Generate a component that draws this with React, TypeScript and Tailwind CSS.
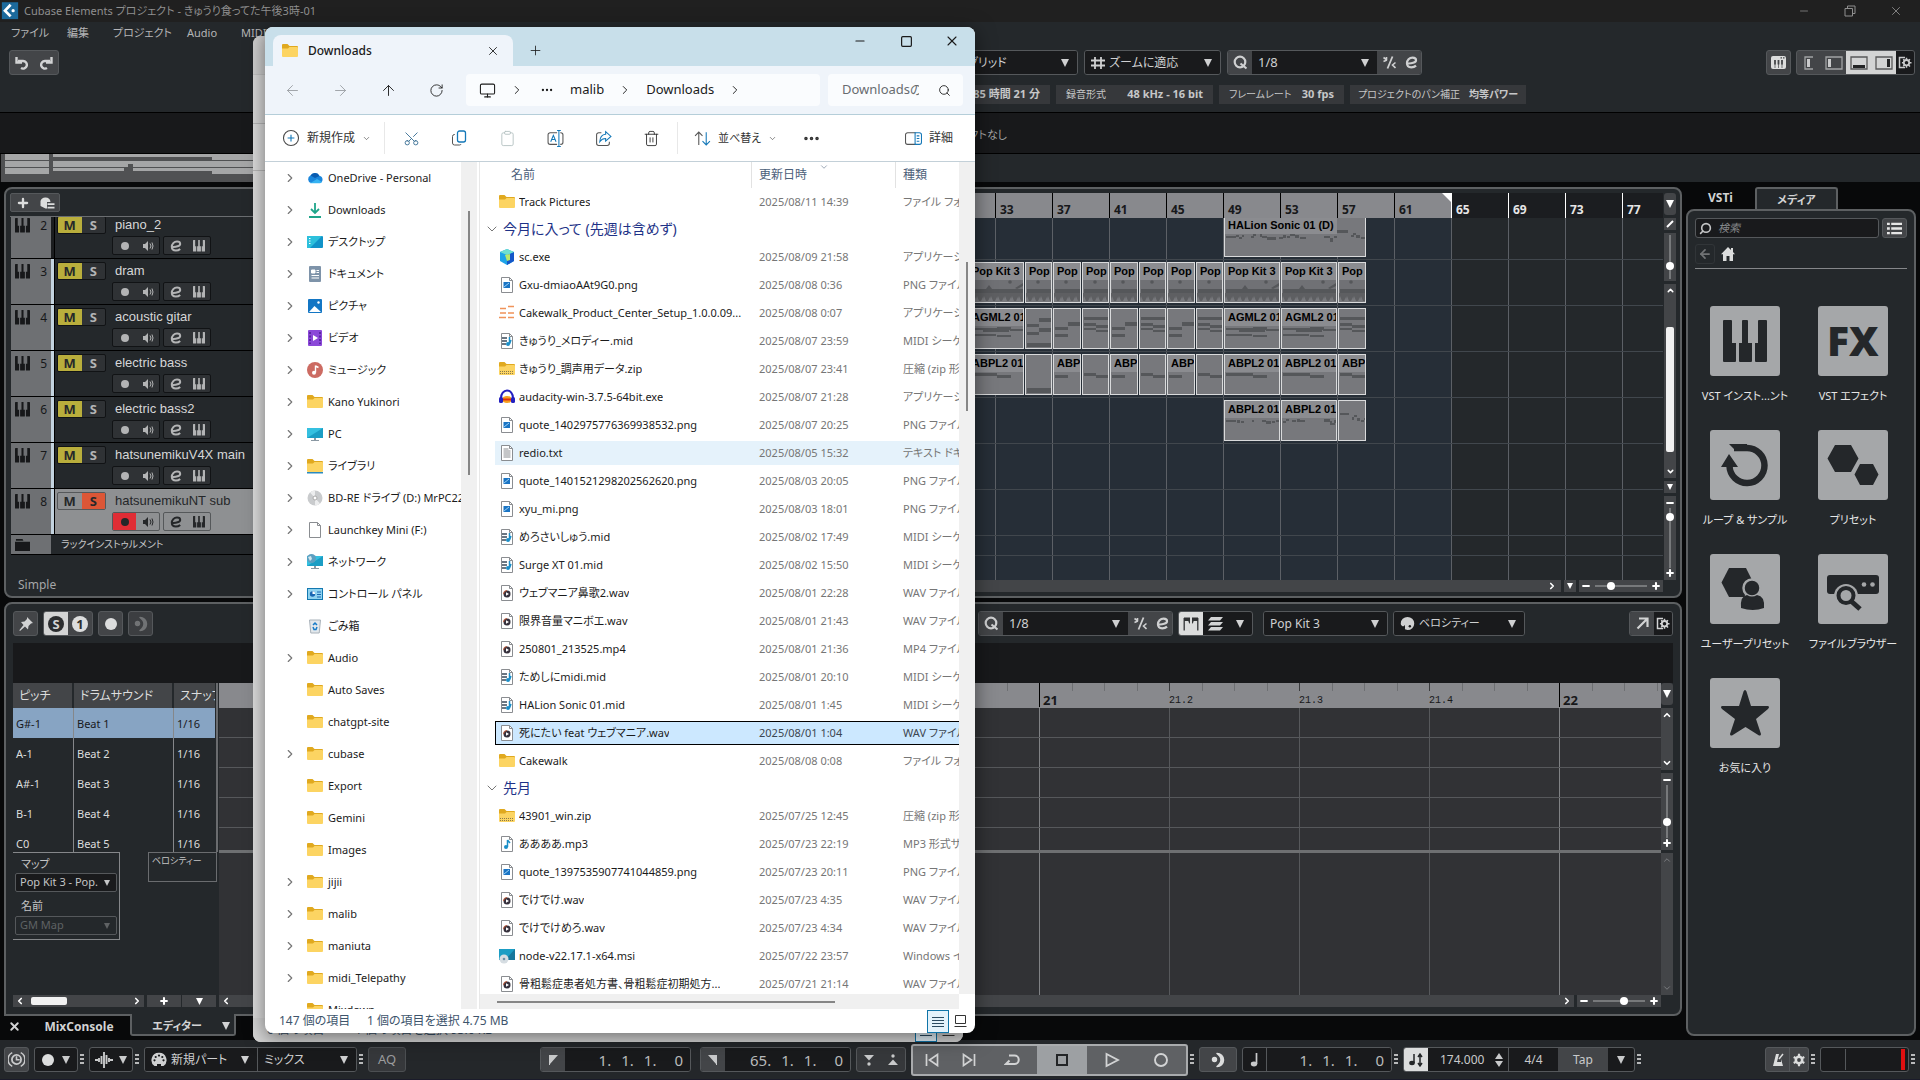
import type { ReactNode } from "react";
import {
  ArrowLeft,
  ArrowRight,
  ArrowUp,
  ChevronDown,
  ChevronLeft,
  ChevronRight,
  ChevronUp,
  Clipboard,
  Ellipsis,
  Minus,
  Monitor,
  Plus,
  RotateCw,
  Scissors,
  Search,
  Square,
  Trash2,
  X,
} from "lucide-react";

type Box = [number, number, number, number];

function Icon({ size = 16, box = 16, children }: { size?: number; box?: number; children: ReactNode }) {
  return (
    <svg width={size} height={size} viewBox={`0 0 ${box} ${box}`} className="shrink-0" aria-hidden="true">
      {children}
    </svg>
  );
}

/* ---------- shared DAW glyphs ---------- */

const Caret = ({ size = 8 }: { size?: number }) => (
  <Icon size={size} box={8}>
    <path d="M0 0h8L4 8z" fill="currentColor" />
  </Icon>
);

const Keys = ({ size = 16 }: { size?: number }) => (
  <Icon size={size} box={22}>
    <path
      fill="currentColor"
      d="M1 0h3v11.500h2V20.500a.8.8 0 0 1-.8.800H.8a.8.8 0 0 1-.8-.8V1a1 1 0 0 1 1-1zM9.500 0h3v11.500h2v9a.8.8 0 0 1-.8.800H8.300a.8.8 0 0 1-.8-.8v-9h2zM18 0h3a1 1 0 0 1 1 1v19.500a.8.8 0 0 1-.8.800h-4.400a.8.8 0 0 1-.8-.8v-9h2z"
    />
  </Icon>
);

const EditE = ({ size = 12 }: { size?: number }) => (
  <Icon size={size} box={12}>
    <path d="M1.800 6.800C6 7.200 10.200 6 10.200 3.900 10.200 2.200 8.500 1.500 7 1.500 4 1.500 1.800 4 1.800 6.800c0 2.300 1.700 3.700 4 3.700 1.800 0 3.200-.5 4.400-1.600" fill="none" stroke="currentColor" strokeWidth="2" />
  </Icon>
);

const Speaker = () => (
  <Icon size={12} box={12}>
    <path d="M1 4h2l3-3v10L3 8H1z" fill="currentColor" />
    <path d="M8 3.500q2 2.500 0 5M10 2.500q2 3.500 0 7" fill="none" stroke="currentColor" />
  </Icon>
);

const Swing = () => (
  <Icon size={13} box={13}>
    <path d="M9.500.5 4.500 12.500" stroke="currentColor" strokeWidth="1.800" />
    <path d="M.5 1.500 4 4M.5 5.500 4 4M3.500 1v3M12.500 6.500 9.500 9l3 3" fill="none" stroke="currentColor" strokeWidth="1.600" />
  </Icon>
);

const QMark = () => (
  <Icon size={15} box={15}>
    <circle cx="7" cy="7" r="5.300" fill="none" stroke="currentColor" strokeWidth="2.200" />
    <path d="M7.500 8.500 13.500 13.500" stroke="currentColor" strokeWidth="2.200" />
  </Icon>
);

const PanelGear = () => (
  <Icon size={14} box={14}>
    <path d="M7 1.500H1.500v10H7" fill="none" stroke="currentColor" strokeWidth="1.500" />
    <circle cx="8.500" cy="6.700" r="2.700" fill="none" stroke="currentColor" strokeWidth="1.800" />
    <path d="M8.500 1.800v2M8.500 9.700v2M3.900 6.700h1.500M11.500 6.700h2M5.200 3.200l1.500 1.500M10.500 9l1.500 1.500M12 3.200 10.300 4.700M5.200 10.300l1.500-1.500" stroke="currentColor" strokeWidth="1.500" />
  </Icon>
);

const Gear = () => (
  <Icon size={14} box={14}>
    <circle cx="7" cy="7" r="3.200" fill="none" stroke="currentColor" strokeWidth="2.600" />
    <path d="M7 .8v3M7 10.200v3M1.700 4l2.500 1.400M9.800 8.600 12.300 10M1.700 10l2.500-1.400M9.800 5.400 12.300 4" stroke="currentColor" strokeWidth="2.200" />
  </Icon>
);

const Moon = () => (
  <Icon size={16}>
    <circle cx="4.500" cy="7.500" r="2.700" fill="currentColor" />
    <path d="M7 1.500a6.500 6.500 0 0 1 0 13q4-3 4-6.500t-4-6.500z" fill="currentColor" stroke="currentColor" strokeWidth="1.500" strokeLinejoin="round" />
  </Icon>
);

const Palette = ({ size = 16 }: { size?: number }) => (
  <Icon size={size}>
    <path d="M8 1a7.200 7 0 0 0-7.200 7c0 2 1.400 3 3 3l1.500-1.500V14l2.700 1a7.200 7 0 0 0 0-14z" fill="currentColor" />
    <circle cx="10.500" cy="11" r="1.300" fill="#1a1b1d" />
  </Icon>
);

const MidiPlug = () => (
  <Icon size={16}>
    <path d="M8 .8A7.300 7.300 0 0 1 12.500 14H10v-2H6v2H3.500A7.300 7.300 0 0 1 8 .8z" fill="currentColor" />
    <g fill="#1a1b1d">
      <circle cx="8" cy="3.600" r="1.100" />
      <circle cx="4.700" cy="5" r="1.100" />
      <circle cx="11.300" cy="5" r="1.100" />
      <circle cx="3.500" cy="8.300" r="1.100" />
      <circle cx="12.500" cy="8.300" r="1.100" />
    </g>
  </Icon>
);

const Dots = () => (
  <Icon size={11} box={11}>
    <path d="M2 0h4v2H2zM2 4h4v2H2zM2 8h4v2H2z" fill="#b9babb" />
  </Icon>
);

function Btn({ label, className = "", children }: { label: string; className?: string; children?: ReactNode }) {
  return (
    <button aria-label={label} className={`flex shrink-0 items-center justify-center ${className}`}>
      {children}
    </button>
  );
}

const group = "flex h-[25px] shrink-0 overflow-hidden rounded-[3px] border border-[#55585b]";

function Drop({ label, value, icon, className = "" }: { label: string; value: string; icon?: ReactNode; className?: string }) {
  return (
    <label className={`relative flex items-center gap-1 bg-[#191a1c] pl-1.5 text-[#cfd0d1] ${className}`}>
      {icon}
      <select aria-label={label} className="w-full min-w-0 appearance-none truncate bg-transparent pr-5 outline-none">
        <option>{value}</option>
      </select>
      <span className="pointer-events-none absolute inset-y-0 right-2 flex items-center">
        <Caret />
      </span>
    </label>
  );
}

const thumb =
  "appearance-none [&::-webkit-slider-thumb]:size-2 [&::-webkit-slider-thumb]:appearance-none [&::-webkit-slider-thumb]:rounded-full [&::-webkit-slider-thumb]:bg-white";

function ZoomH({ value }: { value: number }) {
  return (
    <div className="flex h-3 w-[84px] shrink-0 items-center bg-[#434548] px-0.5 text-white">
      <Minus size={10} strokeWidth={5} />
      <input
        type="range"
        aria-label="横ズーム"
        defaultValue={value}
        className={`${thumb} mx-1 h-3 min-w-0 flex-1 bg-[linear-gradient(#77797b,#77797b)] bg-[length:100%_2px] bg-center bg-no-repeat`}
      />
      <Plus size={10} strokeWidth={5} />
    </div>
  );
}

function ZoomV({ value, className, ends = true }: { value: number; className: string; ends?: boolean }) {
  return (
    <div className={`flex w-3 shrink-0 flex-col items-center bg-[#434548] py-0.5 text-white ${className}`}>
      {ends && <Minus size={10} strokeWidth={5} className="shrink-0" />}
      <input
        type="range"
        aria-label="縦ズーム"
        defaultValue={value}
        className={`${thumb} my-1 min-h-0 w-3 flex-1 bg-[linear-gradient(#77797b,#77797b)] bg-[length:2px_100%] bg-center bg-no-repeat [writing-mode:vertical-lr]`}
      />
      {ends && <Plus size={10} strokeWidth={5} className="shrink-0" />}
    </div>
  );
}

/* ---------- top of the DAW ---------- */

function QuantizeGroup() {
  return (
    <div className={group}>
      <Btn label="クオンタイズ" className="w-6 bg-[#434548] text-[#cfd0d1]"><QMark /></Btn>
      <Drop label="クオンタイズ値" value="1/8" className="w-[125px] text-[13px]" />
      <Btn label="スウィング" className="w-6 bg-[#434548] text-[#cfd0d1]"><Swing /></Btn>
      <Btn label="クオンタイズ編集" className="w-5 bg-[#434548] text-[#cfd0d1]"><EditE size={13} /></Btn>
    </div>
  );
}

function LayoutGlyph({ bar, half = false }: { bar: Box; half?: boolean }) {
  return (
    <Icon size={18} box={18}>
      <path d={half ? "M13 3H5v12h8" : "M1 3h16v12H1z"} fill="none" stroke="currentColor" strokeWidth="1.300" opacity=".7" />
      <rect x={bar[0]} y={bar[1]} width={bar[2]} height={bar[3]} fill="currentColor" />
    </Icon>
  );
}

const chips = [
  ["録音形式", "48 kHz - 16 bit", "w-[157px] px-2.5"],
  ["フレームレート", "30 fps", "w-[125px] px-2.5"],
  ["プロジェクトのパン補正", "均等パワー", "w-[176px] px-2 text-[10px]"],
];

const overview: Box[] = [
  [5, 0, 44, 6], [53, 0, 700, 3], [212, 3, 541, 3],
  [5, 7, 44, 6], [53, 7, 75, 6], [128, 7, 5, 3], [133, 7, 620, 6],
  [5, 14, 44, 6], [53, 14, 71, 3], [133, 14, 79, 3], [212, 14, 541, 6],
];

function TopBars() {
  return (
    <header>
      <div className="flex h-[22px] items-center bg-[#202020] text-[#8f8f8f]">
        <Icon size={20}>
          <rect x="1.500" y="1" width="13" height="13.500" fill="#1c6a9c" />
          <path d="M8.500 3 4 7.700 8.500 12.300" fill="none" stroke="#fff" strokeWidth="2.200" />
          <circle cx="10.500" cy="7.700" r="1.300" fill="#fff" />
        </Icon>
        <h1 className="ml-1 text-[11px]">Cubase Elements プロジェクト - きゅうり食ってた午後3時-01</h1>
        <div className="mr-px ml-auto flex">
          <Btn label="最小化" className="w-[46px]"><Minus size={12} strokeWidth={1.500} /></Btn>
          <Btn label="元に戻す" className="w-[46px]">
            <Icon size={12} box={12}>
              <path d="M1 3.500h7.500V11H1zM3.500 3.500V1H11v7.500H8.500" fill="none" stroke="currentColor" />
            </Icon>
          </Btn>
          <Btn label="閉じる" className="w-[46px]"><X size={14} strokeWidth={1.500} /></Btn>
        </div>
      </div>
      <nav className="flex h-[22px] items-center pl-[11px] text-[11px] text-[#b4b5b6]">
        <button className="w-14 text-left">ファイル</button>
        <button className="w-[46px] text-left">編集</button>
        <button className="w-[74px] text-left">プロジェクト</button>
        <button className="w-[54px] text-left">Audio</button>
        <button className="text-left">MIDI</button>
      </nav>
      <div className="mt-1.5 flex h-[25px] items-center gap-1.5 pr-[5px] pl-[9px] text-xs">
        <div className={`${group} w-[50px] bg-[#434548] text-[#d2d3d4]`}>
          <Btn label="元に戻す" className="flex-1">
            <Icon size={14} box={14}>
              <path d="M3 5h5a3.800 3.800 0 1 1-2 7M1.500 1v5.500H7" fill="none" stroke="currentColor" strokeWidth="2.400" />
            </Icon>
          </Btn>
          <Btn label="やり直す" className="flex-1">
            <Icon size={14} box={14}>
              <path d="M11 5H6a3.800 3.800 0 1 0 2 7M12.500 1v5.500H7" fill="none" stroke="currentColor" strokeWidth="2.400" />
            </Icon>
          </Btn>
        </div>
        <div className={`${group} ml-[895px] w-[118px]`}>
          <Drop label="スナップタイプ" value="グリッド" className="w-full" />
        </div>
        <div className={`${group} w-[137px]`}>
          <Drop
            label="グリッドの種類"
            value="ズームに適応"
            className="w-full"
            icon={
              <Icon size={14} box={14}>
                <path d="M4 1v12M10 1v12M0 4.500h14M0 9.500h14" stroke="currentColor" strokeWidth="1.800" />
              </Icon>
            }
          />
        </div>
        <QuantizeGroup />
        <div className="ml-auto flex gap-[5px]">
          <div className={`${group} w-[25px] justify-center bg-[#434548] text-[#dcdddd]`}>
            <Btn label="オンスクリーンキーボード">
              <Icon size={15} box={15}>
                <rect x="0" y="1" width="15" height="13" rx="2" fill="currentColor" />
                <path d="M9.500 2.800H11M12 2.800h1.500" stroke="#434548" strokeWidth="1.200" />
                <path d="M4 5v4.500M7.500 5v4.500M11 5v4.500" stroke="#434548" strokeWidth="1.800" />
                <path d="M4 9v4M7.500 9v4M11 9v4" stroke="#434548" strokeWidth=".7" />
              </Icon>
            </Btn>
          </div>
          <div className={`${group} bg-[#434548] text-[#c9cacb]`}>
            <Btn label="インスペクター" className="w-6"><LayoutGlyph half bar={[7, 5, 3, 8]} /></Btn>
            <Btn label="左ゾーン" className="w-[25px]"><LayoutGlyph bar={[3, 5, 3, 8]} /></Btn>
            <Btn label="下ゾーン" className="w-[25px] bg-[#d3d4d4] text-[#232425]"><LayoutGlyph bar={[3, 11, 12, 3]} /></Btn>
            <Btn label="右ゾーン" className="w-[25px] bg-[#d3d4d4] text-[#232425]"><LayoutGlyph bar={[12, 5, 3, 8]} /></Btn>
            <Btn label="ウィンドウレイアウト設定" className="w-[18px] bg-[#191a1c]"><PanelGear /></Btn>
          </div>
        </div>
      </div>
      <dl className="mt-2.5 mb-2 flex h-[19px] gap-1.5 pl-[860px] text-[11px] whitespace-nowrap text-[#c6c7c8]">
        <div className="flex w-[190px] items-center justify-end bg-[#36383b] pr-2.5">
          <dd className="font-bold">85 時間 21 分</dd>
        </div>
        {chips.map(([k, v, w]) => (
          <div key={k} className={`flex items-center justify-between bg-[#36383b] ${w}`}>
            <dt className="text-[10px]">{k}</dt>
            <dd className="font-bold">{v}</dd>
          </div>
        ))}
      </dl>
      <div className="flex h-[42px] items-center border-y border-black bg-[#18191b] pt-1 text-[11px] text-[#a3a4a5]">
        <p className="w-[1007px] text-right">オブジェクトなし</p>
      </div>
      <svg width="753" height="28" className="block bg-[#505153]" aria-hidden="true">
        <rect width="1" height="28" fill="#111" />
        {overview.map(([x, y, w, h], i) => (
          <rect key={i} x={x} y={y} width={w} height={h} fill="#a5a6a7" />
        ))}
      </svg>
    </header>
  );
}

/* ---------- project zone ---------- */

const tracks = [
  { no: 2, name: "piano_2" },
  { no: 3, name: "dram" },
  { no: 4, name: "acoustic gitar" },
  { no: 5, name: "electric bass" },
  { no: 6, name: "electric bass2" },
  { no: 7, name: "hatsunemikuV4X main" },
  { no: 8, name: "hatsunemikuNT sub" },
];

function Track({ no, name }: { no: number; name: string }) {
  const active = no === 8;
  const frame = active ? "border-[#55585a] text-[#252729]" : "border-[#111315] bg-[#2f3235] text-[#b3b4b5]";
  return (
    <li className="flex h-[46px] border-b border-black">
      <div className="flex w-10 justify-between bg-[#6e7073] pt-[5px] pr-1 pl-1 text-[#17181a]">
        <Keys size={15} />
        <span className="text-xs leading-4">{no}</span>
      </div>
      <div className={`w-[3px] ${no === 2 ? "bg-[#1b1d1f]" : "bg-[#c3d3df]"}`} />
      <div className={`flex-1 border-l border-black pt-[3px] pl-0.5 ${active ? "bg-[#8e9092]" : ""}`}>
        <div className="flex h-[18px] items-center">
          <div className={`flex h-[18px] w-[49px] overflow-hidden rounded-[2px] border text-[13px] leading-4 font-bold ${frame}`}>
            <button className={`flex-1 ${active ? "" : "bg-[#b9ae3c] text-[#26282a]"}`}>M</button>
            <button className={`flex-1 ${active ? "bg-[#dc5636] text-[#26282a]" : ""}`}>S</button>
          </div>
          <span className={`ml-[9px] font-['Liberation_Sans','Noto_Sans_CJK_JP',sans-serif] text-[13px] leading-4 ${active ? "text-[#252729]" : "text-[#d6d7d8]"}`}>
            {name}
          </span>
        </div>
        <div className="mt-0.5 ml-[55px] flex h-[19px] gap-[3px]">
          <div className={`flex w-12 overflow-hidden rounded-[2px] border ${frame}`}>
            <Btn label="録音可能" className={`flex-1 ${active ? "bg-[#e02d35]" : ""}`}>
              <span className="size-2 rounded-full bg-current" />
            </Btn>
            <Btn label="モニター" className="flex-1"><Speaker /></Btn>
          </div>
          <div className={`flex w-12 overflow-hidden rounded-[2px] border ${frame}`}>
            <Btn label="チャンネル設定の編集" className="flex-1"><EditE /></Btn>
            <Btn label="インストゥルメントの編集" className="flex-1"><Keys size={12} /></Btn>
          </div>
        </div>
      </div>
    </li>
  );
}

// bars left of 33 keep their ticks but carry no number
const bars = [9, 13, 17, 21, 25, 29, 33, 37, 41, 45, 49, 53, 57, 61, 65, 69, 73, 77];

const noteShapes: Record<string, Box[]> = {
  agWide: [[1, 19, 40, 2], [14, 20, 26, 3], [28, 18, 14, 3], [41, 20, 14, 2], [1, 25, 26, 2], [28, 26, 14, 2]],
  agA: [[1, 15, 12, 3], [13, 9, 13, 4], [1, 23, 12, 3], [13, 19, 13, 4], [1, 34, 25, 4]],
  agB: [[1, 18, 13, 3], [14, 13, 13, 4], [1, 25, 13, 3]],
  agC: [[1, 8, 25, 3], [1, 14, 12, 3], [13, 16, 13, 3], [1, 19, 12, 2], [13, 21, 13, 2]],
  bassWide: [[1, 18, 27, 3], [28, 20, 14, 3]],
  bassLow: [[1, 33, 25, 5]],
  bassS: [[1, 20, 13, 3]],
  bassT: [[1, 18, 12, 3], [13, 20, 13, 3]],
  bits: [[1, 19, 10, 2], [12, 19, 3, 3], [16, 20, 3, 2], [27, 19, 2, 2], [37, 19, 4, 2], [41, 20, 5, 3], [47, 20, 3, 2], [51, 19, 4, 2]],
  bits2: [[1, 20, 3, 2], [4, 18, 3, 2], [10, 19, 4, 2], [15, 18, 3, 3], [18, 19, 5, 2], [42, 18, 6, 3], [48, 20, 2, 4], [50, 22, 3, 2], [52, 19, 3, 3]],
  bits3: [[1, 12, 9, 2], [13, 16, 2, 3], [15, 14, 3, 2], [18, 17, 3, 3], [22, 19, 3, 2], [25, 17, 2, 2]],
  lead: [[1, 19, 10, 2], [11, 18, 3, 2], [14, 20, 3, 2], [17, 18, 2, 2], [26, 19, 3, 2], [28, 17, 3, 2], [35, 17, 2, 3], [37, 19, 5, 2], [42, 20, 9, 3], [54, 20, 4, 2], [58, 18, 3, 3], [62, 19, 3, 2], [65, 17, 5, 2], [70, 18, 4, 3], [75, 20, 6, 2], [99, 19, 6, 2], [105, 21, 3, 4], [109, 19, 3, 2], [112, 13, 11, 3], [126, 18, 3, 2], [128, 16, 3, 2], [131, 18, 4, 3], [136, 20, 5, 2]],
};

type ClipData = [left: number, width: number, label: string, notes: string];

const cuts: [number, number][] = [
  [315, 57], [372, 28], [400, 29], [429, 28], [457, 29], [486, 28], [514, 29], [543, 28], [571, 57], [628, 57], [685, 29],
];
const row = (labels: string[], notes: string[]): ClipData[] =>
  cuts.map(([x, w], i) => [x, w, labels[i], notes[i]]);

const lanes: [string, ClipData[]][] = [
  ["-top-0.5", [[571, 143, "HALion Sonic 01 (D)", "lead"]]],
  ["top-[44px]", row(["Pop Kit 3", "Pop", "Pop", "Pop", "Pop", "Pop", "Pop", "Pop", "Pop Kit 3", "Pop Kit 3", "Pop"], Array(11).fill("drum"))],
  ["top-[90px]", row(["AGML2 01", "", "", "", "", "", "", "", "AGML2 01", "AGML2 01", ""], ["agWide", "agA", "agB", "agC", "agB", "agC", "agB", "agC", "agWide", "agWide", "agC"])],
  ["top-[136px]", row(["ABPL2 01", "", "ABP", "", "ABP", "", "ABP", "", "ABPL2 01", "ABPL2 01", "ABP"], ["bassWide", "bassLow", "bassS", "bassT", "bassS", "bassT", "bassS", "bassT", "bassWide", "bassWide", "bassT"])],
  ["top-[182px]", [[571, 57, "ABPL2 01", "bits"], [628, 57, "ABPL2 01", "bits2"], [685, 29, "", "bits3"]]],
];

function DrumNotes({ width }: { width: number }) {
  const hits = Array.from({ length: Math.ceil(width / 7) }, (_, i) => i * 7);
  return (
    <g fill="#55575a">
      <rect x="1" y="17" width={width - 4} height="9" opacity=".2" />
      <rect x="1" y="26" width={width - 4} height="4" />
      <circle cx={width > 30 ? 41 : 12} cy="19" r="1.800" />
      {width > 30 && <path d="M17 26l3-4 3 4zM46 25l8-5v3l-6 3z" />}
      {hits.map((x) => (
        <path key={x} d={`M${x} 30h7v4l-2 4h-2l-2-5-1 3z`} opacity=".75" />
      ))}
    </g>
  );
}

function Clip({ clip: [left, width, label, notes] }: { clip: ClipData }) {
  return (
    <div className="absolute h-[41px] overflow-hidden border border-[#d9dadb] bg-[#77787c]" style={{ left, width: width - 1 }}>
      <svg width={width - 3} height="39" className="absolute inset-0" aria-hidden="true">
        {label && <rect width={Math.min(width, 112)} height="17" fill="#8b8c90" />}
        {notes === "drum" ? (
          <DrumNotes width={width} />
        ) : (
          noteShapes[notes].map(([x, y, w, h], i) => <rect key={i} x={x} y={y} width={w} height={h} fill="#55575a" />)
        )}
      </svg>
      <span className="relative block pl-[3px] font-['Liberation_Sans',sans-serif] text-[11px] leading-[17px] font-bold whitespace-nowrap text-black">
        {label}
      </span>
    </div>
  );
}

function ProjectZone() {
  return (
    <section className="flex rounded-lg border-2 border-[#5d6062] bg-[#24282b] p-1">
      <div className="flex w-[643px] shrink-0 flex-col">
        <div className="flex h-[19px] w-[50px] overflow-hidden rounded-[2px] border border-[#55585b] bg-[#434548] text-[#dcdddd]">
          <Btn label="トラックを追加" className="flex-1"><Plus size={14} strokeWidth={4} /></Btn>
          <Btn label="トラックプリセットを使用" className="flex-1">
            <Icon size={16}>
              <path d="M6.500 2.500a5 5 0 0 1 5 4.500H8v6.500H6.500L1.500 11V6a5 5 0 0 1 5-3.500z" fill="currentColor" />
              <path d="M8.500 9.200h7M8.500 12.700h7" stroke="currentColor" strokeWidth="1.800" />
            </Icon>
          </Btn>
        </div>
        <div className="mt-1 overflow-hidden border-t border-[#6a6d70]">
          <ul className="-mt-1 pl-px">
            {tracks.map((t) => (
              <Track key={t.no} {...t} />
            ))}
            <li className="flex h-5 items-center border-b border-black text-[10px] text-[#c4c5c6]">
              <span className="flex h-full w-10 items-center bg-[#6e7073] pl-1 text-[#17181a]">
                <Icon size={15}>
                  <path d="M1 2h7l1 2H1zM0 5h16v10H0z" fill="currentColor" />
                </Icon>
              </span>
              <span className="pl-2.5">ラックインストゥルメント</span>
            </li>
          </ul>
        </div>
        <p className="mt-auto pl-2 text-xs leading-[14px] text-[#a5a6a7]">Simple</p>
      </div>

      <div className="flex min-w-0 flex-1 flex-col">
        <div className="flex h-[25px] overflow-hidden bg-[#1b1d20] text-xs font-bold">
          {bars.map((b) => (
            <div
              key={b}
              className={`flex w-[57px] shrink-0 items-end justify-between border-l pl-1 ${b < 65 ? "border-black bg-[#88898d] text-[#17181a]" : "border-white text-[#e6e6e6]"}`}
            >
              {b >= 33 && b}
              {b === 61 && (
                <span className="self-start text-white">
                  <Icon size={9} box={9}><path d="M0 0h9v9z" fill="currentColor" /></Icon>
                </span>
              )}
            </div>
          ))}
        </div>
        <div className="relative h-[362px] overflow-hidden bg-[#24282b]">
          <div className="absolute inset-y-0 left-0 w-[798px] bg-[#262e37]" />
          <div className="absolute inset-0 bg-[repeating-linear-gradient(90deg,#5c6066_0_1px,transparent_1px_57px)]" />
          <div className="absolute inset-0 grid grid-rows-[42px_repeat(6,46px)_20px] divide-y divide-[#41474d]">
            {[...tracks, { no: 9 }].map((t) => (
              <div key={t.no} />
            ))}
            <div />
          </div>
          {lanes.map(([top, clips]) => (
            <div key={top} className={`absolute left-0 ${top}`}>
              {clips.map((c) => (
                <Clip key={c[0]} clip={c} />
              ))}
            </div>
          ))}
        </div>
        <div className="flex h-3 gap-[3px]">
          <div className="flex flex-1 items-center justify-end bg-[#434548] pr-1 text-white"><ChevronRight size={10} strokeWidth={4} /></div>
          <Btn label="ズームプリセット" className="w-3 bg-[#434548] text-white"><Caret size={6} /></Btn>
          <ZoomH value={28} />
        </div>
      </div>

      <div className="ml-px flex w-3 flex-col gap-[3px] text-white">
        <Btn label="ルーラーメニュー" className="h-[22px] rounded-[3px] bg-[#434548]"><Caret /></Btn>
        <Btn label="編集" className="h-3 bg-[#434548]">
          <Icon size={8} box={8}><path d="M1 7 7 1" stroke="#fff" strokeWidth="2" /></Icon>
        </Btn>
        <ZoomV value={76} ends={false} className="h-12" />
        <div className="flex flex-1 flex-col items-center bg-[#434548] py-0.5">
          <ChevronUp size={9} strokeWidth={4} />
          <div className="mt-8 h-[125px] w-2 rounded-xs bg-[#f1f1f1]" />
          <ChevronDown size={9} strokeWidth={4} className="mt-auto" />
        </div>
        <Btn label="縦ズームプリセット" className="h-3 bg-[#434548]"><Caret size={6} /></Btn>
        <ZoomV value={9} className="mb-3 h-[84px]" />
      </div>
    </section>
  );
}

/* ---------- drum editor ---------- */

const drums = [
  ["G#-1", "Beat 1"],
  ["A-1", "Beat 2"],
  ["A#-1", "Beat 3"],
  ["B-1", "Beat 4"],
  ["C0", "Beat 5"],
];

const beats = ["", "", "", "", "", "", "21", "21.2", "21.3", "21.4", "22"];

function BeatLines() {
  return (
    <div className="absolute inset-0 flex overflow-hidden pl-10">
      {beats.map((b, i) => (
        <div key={i} className={`w-[130px] shrink-0 border-l ${b === "21" || b === "22" ? "border-[#808285]" : "border-[#56585b]"}`} />
      ))}
    </div>
  );
}

function EditorZone() {
  return (
    <section className="flex flex-1 flex-col rounded-lg rounded-bl-none border-2 border-[#5d6062] bg-[#24282b] pr-[7px] pb-[7px] pl-[7px]">
      <div className="flex h-[39px] items-center gap-[5px] text-xs text-[#d2d3d4]">
        <div className={`${group} w-[25px] justify-center bg-[#434548]`}>
          <Btn label="固定">
            <Icon size={16}>
              <path d="M9 1l6 6-2 .5-2.500 2.500-.5 3.500-3-3L2 15l-.7-.7L5.500 9 3 6l3.500-.5L9 3z" fill="currentColor" />
            </Icon>
          </Btn>
        </div>
        <div className={`${group} w-[50px] bg-[#434548]`}>
          <button className="flex flex-1 items-center justify-center bg-[#d3d4d4]">
            <span className="size-4 rounded-full bg-[#2b2d2f] text-center text-[13px] leading-4 font-bold text-[#d3d4d4]">S</span>
          </button>
          <button className="flex flex-1 items-center justify-center">
            <span className="size-4 rounded-full bg-[#dcdddd] text-center text-[13px] leading-4 font-bold text-[#2b2d2f]">1</span>
          </button>
        </div>
        <div className={`${group} w-[25px] justify-center bg-[#434548]`}>
          <Btn label="エディターで録音"><span className="size-3 rounded-full bg-[#dcdddd]" /></Btn>
        </div>
        <div className={`${group} w-[25px] justify-center bg-[#3c3e41] text-[#717375]`}>
          <Btn label="レトロスペクティブ録音"><Moon /></Btn>
        </div>
        <div className="ml-[820px]"><QuantizeGroup /></div>
        <div className={`${group} w-[75px] bg-[#191a1c]`}>
          <Btn label="パート境界線" className="w-6 bg-[#dcdddd] text-[#303234]">
            <Icon size={16}>
              <path d="M1.200 14.500V2M14.800 14.500V2" stroke="currentColor" strokeWidth="1.300" />
              <path d="M1 1.500h6v3.500H1zM9 1.500h6v3.500H9zM5.500 2H7v6l-1.500-2zM9 2h1.500v4L9 8z" fill="currentColor" />
            </Icon>
          </Btn>
          <Btn label="パートを編集" className="flex-1">
            <Icon size={16}>
              <path d="M4 1h12l-3 3.500H1zM4 6h12l-3 3.500H1zM4 11h12l-3 3.500H1z" fill="currentColor" />
            </Icon>
          </Btn>
          <Btn label="パート一覧" className="flex-1"><Caret /></Btn>
        </div>
        <div className={`${group} ml-[5px] w-[125px]`}><Drop label="編集中のパート" value="Pop Kit 3" className="w-full" /></div>
        <div className={`${group} w-[132px]`}>
          <Drop label="イベントカラー" value="ベロシティー" className="w-full text-[11px]" icon={<Palette size={15} />} />
        </div>
        <div className={`${group} ml-auto w-11`}>
          <Btn label="別ウィンドウで開く" className="w-6 bg-[#434548]">
            <Icon size={13} box={13}><path d="M1.500 11.500 11 2M3 1.500h8.500V10" fill="none" stroke="currentColor" strokeWidth="2.200" /></Icon>
          </Btn>
          <Btn label="ツールバー設定" className="w-[18px] bg-[#191a1c]"><PanelGear /></Btn>
        </div>
      </div>
      <div className="h-10 bg-[#18191b]" />

      <div className="flex flex-1">
        <div className="flex w-[206px] flex-col">
          <div className="mr-px h-[169px] overflow-hidden border-r-2 border-[#6a6c6f] pr-px">
            <table className="w-full table-fixed border-separate border-spacing-0 text-left text-[11px] text-[#dcdddd]">
              <colgroup>
                <col className="w-[61px]" />
                <col className="w-[100px]" />
                <col />
              </colgroup>
              <thead>
                <tr className="h-[25px] bg-[#434548] text-xs whitespace-nowrap">
                  <th className="overflow-hidden border-r-2 border-[#24282b] pl-1.5 font-normal">ピッチ</th>
                  <th className="overflow-hidden border-r-2 border-[#24282b] pl-1.5 font-normal">ドラムサウンド</th>
                  <th className="overflow-hidden pl-1.5 font-normal">スナップ</th>
                </tr>
              </thead>
              <tbody>
                {drums.map(([pitch, sound], i) => (
                  <tr key={pitch} className={`h-[30px] ${i === 0 ? "bg-[#87a4c3] text-[#17191c]" : ""}`}>
                    <td className="border-r border-[#85878a] pt-0.5 pl-[3px]">{pitch}</td>
                    <td className="border-r border-[#85878a] pt-0.5 pl-[3px]">{sound}</td>
                    <td className="pt-0.5 pl-[3px]">1/16</td>
                  </tr>
                ))}
              </tbody>
            </table>
          </div>
          <div className="flex items-start justify-between pr-0.5 text-[11px] text-[#c4c5c6]">
            <div className="flex w-[107px] flex-col border border-l-0 border-[#85878a] px-0.5 pt-[3px] pb-1">
              <label htmlFor="drum-map" className="h-[17px] pl-1.5">マップ</label>
              <div className="relative flex h-[19px] items-center rounded-[2px] border border-[#55585b] bg-[#191a1c] pl-1">
                <select id="drum-map" className="w-full appearance-none bg-transparent outline-none"><option>Pop Kit 3 - Pop.</option></select>
                <span className="pointer-events-none absolute right-1.5"><Caret size={6} /></span>
              </div>
              <label htmlFor="drum-name" className="mt-1.5 h-[18px] pl-1.5">名前</label>
              <div className="relative flex h-[19px] items-center rounded-[2px] border border-[#55585b] pl-1 text-[#5f6264]">
                <select id="drum-name" disabled className="w-full appearance-none bg-transparent outline-none"><option>GM Map</option></select>
                <span className="pointer-events-none absolute right-1.5"><Caret size={6} /></span>
              </div>
            </div>
            <p className="h-[30px] w-[69px] border border-[#6a6c6f] px-[3px] text-[9px] leading-4 whitespace-nowrap">ベロシティー</p>
          </div>
          <div className="mt-auto flex h-3 gap-[3px] pr-[3px] text-white">
            <div className="flex w-[131px] items-center bg-[#434548] px-0.5">
              <ChevronLeft size={10} strokeWidth={4} />
              <div className="ml-1.5 h-2 w-9 rounded-xs bg-[#f1f1f1]" />
              <ChevronRight size={10} strokeWidth={4} className="ml-auto" />
            </div>
            <Btn label="コントローラーレーンを追加" className="flex-1 bg-[#434548]"><Plus size={10} strokeWidth={5} /></Btn>
            <Btn label="レーンプリセット" className="-ml-0.5 flex-1 bg-[#434548]"><Caret size={7} /></Btn>
          </div>
        </div>

        <div className="flex min-w-0 flex-1 flex-col">
          <div className="flex h-[25px] overflow-hidden bg-[#88898d] pl-10 text-[#17181a]">
            {beats.map((b, i) => {
              const major = b === "21" || b === "22";
              return (
                <div key={i} className="flex h-full w-[130px] shrink-0 flex-col justify-between">
                  <div className="flex h-2">
                    <span className={`w-[33px] border-l ${major ? "h-6 border-black" : "h-2 border-[#3a3b3d]"}`} />
                    <span className="w-8 border-l border-[#6e7073]" />
                    <span className="w-[33px] border-l border-[#6e7073]" />
                    <span className="w-8 border-l border-[#6e7073]" />
                  </div>
                  <span className={major ? "pl-1 text-[13px] leading-4 font-bold" : "font-['Liberation_Mono',monospace] text-[10px] leading-[14px]"}>{b}</span>
                </div>
              );
            })}
          </div>
          <div className="relative h-[142px] bg-[#313235]">
            <BeatLines />
            <div className="absolute inset-0 grid grid-rows-[30px_30px_30px_30px_auto] divide-y divide-[#56585b]">
              {drums.map(([p]) => (
                <div key={p} />
              ))}
            </div>
          </div>
          <div className="h-[3px] bg-[#6e7072]" />
          <div className="relative flex-1 bg-[#313235]"><BeatLines /></div>
          <div className="flex h-3 gap-[3px] text-white">
            <div className="flex flex-1 items-center justify-between bg-[#434548] px-0.5">
              <ChevronLeft size={10} strokeWidth={4} />
              <ChevronRight size={10} strokeWidth={4} />
            </div>
            <ZoomH value={62} />
          </div>
        </div>

        <div className="flex w-3 flex-col gap-[3px] text-white">
          <Btn label="エディタールーラー" className="h-[22px] rounded-[3px] bg-[#434548]"><Caret /></Btn>
          <div className="flex h-[62px] flex-col items-center justify-between bg-[#434548] py-0.5">
            <ChevronUp size={10} strokeWidth={4} />
            <ChevronDown size={10} strokeWidth={4} />
          </div>
          <ZoomV value={73} className="h-[77px]" />
          <div className="mb-3 flex flex-1 flex-col items-center justify-between bg-[#434548] py-0.5 text-[#85878a]">
            <ChevronUp size={10} />
            <ChevronDown size={10} />
          </div>
        </div>
      </div>
    </section>
  );
}

/* ---------- right zone ---------- */

const media: [string, ReactNode][] = [
  ["VST インスト...ント", <g key="k" transform="translate(13 14)"><path d="M1 0h7a1 1 0 0 1 1 1v22h4v18a1 1 0 0 1-1 1H1a1 1 0 0 1-1-1V1a1 1 0 0 1 1-1zM20 0h4a1 1 0 0 1 1 1v22h4v18a1 1 0 0 1-1 1H17a1 1 0 0 1-1-1V23h3V1a1 1 0 0 1 1-1zM36 0h7a1 1 0 0 1 1 1v40a1 1 0 0 1-1 1H33a1 1 0 0 1-1-1V23h3V1a1 1 0 0 1 1-1z" /></g>],
  ["VST エフェクト", <text key="f" x="9" y="50" fontSize="41" fontWeight="800" fontFamily="Open Sans">FX</text>],
  ["ループ & サンプル", <g key="l"><path d="M24 18h13a17.500 17.500 0 1 1-17.500 18" fill="none" stroke="#24272a" strokeWidth="6.500" /><path d="M11 37l8-13 9 13zM19 14h18v7H26z" /></g>],
  ["プリセット", <path key="p" d="M17 15h16l7.500 13.500L33 42H17L9.500 28.500zM42 34h13l5.500 10.500L55 55H42l-5.500-10.500z" />],
  ["ユーザープリセット", <g key="u"><path d="M19 14h17l7 14-9 15H19l-7.500-14.500z" /><circle cx="42" cy="34" r="8.500" stroke="#a5a7a9" strokeWidth="2.500" /><path d="M31 54q-1-12 6-13 5 3 10 0 8 1 7 13-11 4-23 0z" /></g>],
  ["ファイルブラウザー", <g key="b"><rect x="9" y="21" width="52" height="19" rx="3" /><circle cx="46" cy="30.500" r="2.300" fill="#a5a7a9" /><circle cx="54.500" cy="30.500" r="2.300" fill="#a5a7a9" /><circle cx="28" cy="42" r="12" fill="#a5a7a9" /><circle cx="28" cy="41.500" r="7.500" fill="none" stroke="#24272a" strokeWidth="4" /><path d="M33 47l9 8" stroke="#24272a" strokeWidth="5" /></g>],
  ["お気に入り", <path key="s" d="M35 12q1 0 1.500 1.500L41 28h17q2 1 0 3L46 41l5 15q0 2-2 1.500L35.500 49 22 57.500q-2 .5-2-1.500l5-15L12 31q-2-2 0-3h17l4.500-14.500Q34 12 35 12z" />],
];

function RightZone() {
  return (
    <aside className="mb-1 flex w-[230px] flex-col text-xs">
      <div className="flex h-[22px] items-stretch font-bold text-[#d2d3d4]">
        <button className="w-[69px] pl-[22px] text-left">VSTi</button>
        <button className="-mb-0.5 w-[83px] rounded-t-[3px] border-2 border-b-0 border-[#5d6062] bg-[#24282b] text-[11px]">メディア</button>
      </div>
      <div className="flex-1 rounded-lg border-2 border-[#5d6062] bg-[#24282b] p-[7px]">
        <div className="flex gap-[3px]">
          <label className="flex h-5 flex-1 items-center gap-1.5 rounded-[3px] border border-[#55585b] bg-[#191a1c] px-[3px] text-[#c4c5c6]">
            <Search size={13} strokeWidth={3} className="shrink-0 -scale-x-100" />
            <input type="search" aria-label="メディア検索" placeholder="検索" className="w-full min-w-0 bg-transparent text-[11px] italic outline-none placeholder:text-[#85878a]" />
          </label>
          <Btn label="表示設定" className="h-5 w-[25px] rounded-[3px] border border-[#55585b] bg-[#434548] text-[#e6e6e6]">
            <Icon size={15}><path d="M0 3h3M4.500 3H16M0 8h3M4.500 8H16M0 13h3M4.500 13H16" stroke="currentColor" strokeWidth="2.500" /></Icon>
          </Btn>
        </div>
        <div className="mt-1.5 flex h-[25px] items-start gap-1.5 border-b border-[#85878a]">
          <Btn label="戻る" className="size-5 rounded-[3px] border border-[#313538] text-[#717375]"><ArrowLeft size={14} strokeWidth={3} /></Btn>
          <Btn label="ホーム" className="h-5 text-[#dcdddd]">
            <Icon size={14} box={14}><path d="M7 0l3 3V1h2v4l2 2.300h-2V14H8.500V9h-3v5H2V7.300H0z" fill="currentColor" /></Icon>
          </Btn>
        </div>
        <div className="-ml-1 grid grid-cols-2 pt-[37px]">
          {media.map(([name, art]) => (
            <button key={name} className="flex h-[124px] flex-col items-center text-[11px] text-[#e6e6e6]">
              <svg width="70" height="70" viewBox="0 0 70 70" className="rounded-[3px] bg-[#a5a7a9] fill-[#24272a]" aria-hidden="true">{art}</svg>
              <span className="mt-2.5 leading-5 whitespace-nowrap">{name}</span>
            </button>
          ))}
        </div>
      </div>
    </aside>
  );
}

/* ---------- transport ---------- */

function Time({ parts }: { parts: string[] }) {
  return (
    <output className="flex flex-1 items-center justify-end gap-2.5 bg-[#191a1c] pr-[7px] text-[15px] text-[#b9babb]">
      {parts.map((p, i) => (
        <span key={i} className={i === 3 ? "ml-2" : ""}>{p}</span>
      ))}
    </output>
  );
}

function Transport() {
  return (
    <footer className="flex h-10 items-center border-b border-[#1a1b2a] bg-[#24272a] px-1 text-xs text-[#c9cacb]">
      <div className={`${group} w-[25px] justify-center bg-[#434548]`}>
        <Btn label="オーディオ処理">
          <Icon size={17}>
            <circle cx="8" cy="8" r="4.300" fill="none" stroke="currentColor" strokeWidth="1.700" />
            <path d="M8 5v3.300h3M4 1.500a7.300 7.300 0 0 0 0 13M12 1.500a7.300 7.300 0 0 1 0 13" fill="none" stroke="currentColor" strokeWidth="1.500" />
          </Icon>
        </Btn>
      </div>
      <div className={`${group} ml-[5px] w-11 items-center justify-evenly bg-[#191a1c]`}>
        <span className="size-3 rounded-full bg-[#dcdddd]" />
        <Btn label="録音モード"><Caret /></Btn>
      </div>
      <Dots />
      <div className={`${group} w-11 items-center justify-evenly bg-[#191a1c]`}>
        <Icon size={18} box={18}><path d="M0 9h3M4 7v4M6.500 5v8M9 1v16M11.500 4v9M14 7v4M15 9h3" stroke="currentColor" strokeWidth="1.900" /></Icon>
        <Btn label="オーディオ録音モード"><Caret /></Btn>
      </div>
      <Dots />
      <div className={`${group} w-[213px]`}>
        <Drop label="MIDI録音モード" value="新規パート" icon={<MidiPlug />} className="w-28 pl-1 text-xs" />
        <Drop label="サイクル録音モード" value="ミックス" className="flex-1 border-l border-[#55585b] text-xs" />
      </div>
      <Dots />
      <button className="h-[25px] w-[38px] rounded-[3px] border border-[#4c4f52] bg-[#36383b] text-[13px] text-[#9c9d9e]">AQ</button>

      <div className={`${group} ml-[134px] w-[151px]`}>
        <Btn label="左ロケーターへ" className="w-6 bg-[#434548]"><Icon size={10} box={10}><path d="M1 0h9L2 9v1H1z" fill="currentColor" /></Icon></Btn>
        <Time parts={["1.", "1.", "1.", "0"]} />
      </div>
      <div className={`${group} ml-[9px] w-[151px]`}>
        <Btn label="右ロケーターへ" className="w-6 bg-[#434548]"><Icon size={10} box={10}><path d="M9 0H0l8 9v1h1z" fill="currentColor" /></Icon></Btn>
        <Time parts={["65.", "1.", "1.", "0"]} />
      </div>
      <div className={`${group} ml-[5px] w-[50px] bg-[#36383b]`}>
        <Btn label="パンチイン" className="flex-1"><Icon size={12} box={12}><path d="M1 1h10L6 6.500z" fill="currentColor" /><circle cx="6" cy="10" r="1.700" fill="currentColor" /></Icon></Btn>
        <Btn label="パンチアウト" className="flex-1"><Icon size={12} box={12}><path d="M1 11h10L6 5.500z" fill="currentColor" /><circle cx="6" cy="2" r="1.700" fill="currentColor" /></Icon></Btn>
      </div>
      <div className="ml-[5px] flex h-8 w-[277px] shrink-0 overflow-hidden rounded-[3px] border-2 border-[#a9abad] bg-[#5f6164] text-[#d2d3d4]">
        <Btn label="前のマーカーへ" className="w-[37px]"><Icon size={14} box={14}><path d="M1.500 1v12M12.500 1.500v11L4.500 7z" fill="none" stroke="currentColor" strokeWidth="1.700" /></Icon></Btn>
        <Btn label="次のマーカーへ" className="w-[37px]"><Icon size={14} box={14}><path d="M12.500 1v12M1.500 1.500v11L9.500 7z" fill="none" stroke="currentColor" strokeWidth="1.700" /></Icon></Btn>
        <Btn label="サイクル" className="w-[50px]"><Icon size={16}><path d="M5 3.500h5.500a4 4 0 0 1 0 8.500H2M5.500 8.500 2 12h4" fill="none" stroke="currentColor" strokeWidth="2" /></Icon></Btn>
        <Btn label="停止" className="w-[50px] bg-[#9da0a3] text-[#232527]"><Icon size={14} box={14}><path d="M2 2h10v10H2z" fill="none" stroke="currentColor" strokeWidth="2" /></Icon></Btn>
        <Btn label="再生" className="flex-1"><Icon size={16}><path d="M2.500 2v12L14 8z" fill="none" stroke="currentColor" strokeWidth="1.800" /></Icon></Btn>
        <Btn label="録音" className="flex-1"><Icon size={16}><circle cx="8" cy="8" r="6" fill="none" stroke="currentColor" strokeWidth="1.900" /></Icon></Btn>
      </div>
      <Dots />
      <div className={`${group} w-[38px] justify-center bg-[#434548] text-[#dcdddd]`}><Btn label="レトロスペクティブ録音"><Moon /></Btn></div>
      <div className={`${group} ml-[5px] w-[150px] bg-[#191a1c]`}>
        <Btn label="時間形式" className="w-6 border-r border-[#55585b]"><Icon size={14} box={14}><path d="M8.500 0v11" stroke="currentColor" strokeWidth="1.700" /><ellipse cx="6" cy="11" rx="3.200" ry="2.400" fill="currentColor" /></Icon></Btn>
        <Time parts={["1.", "1.", "1.", "0"]} />
      </div>
      <Dots />
      <div className={`${group} w-[232px] bg-[#191a1c]`}>
        <Btn label="テンポトラック" className="w-6 bg-[#dcdddd] text-[#232527]">
          <Icon size={16}><path d="M6 2v9M12 3v10M10 5l2-3 2 3M10 11l2 3 2-3" fill="none" stroke="currentColor" strokeWidth="1.500" /><ellipse cx="4" cy="11" rx="2.800" ry="2.200" fill="currentColor" /></Icon>
        </Btn>
        <label className="flex w-20 items-center">
          <input aria-label="テンポ" defaultValue="174.000" className="w-16 bg-transparent pl-3 text-xs outline-none" />
          <Icon size={14} box={14}><path d="M3 6l4-6 4 6zM3 8h8l-4 6z" fill="currentColor" /></Icon>
        </label>
        <button className="w-[50px] border-l border-[#55585b]">4/4</button>
        <button className="w-[50px] bg-[#434548]">Tap</button>
        <Btn label="タップテンポ設定" className="flex-1"><Caret /></Btn>
      </div>
      <Dots />
      <div className={`${group} ml-auto w-11 bg-[#434548] text-[#dcdddd]`}>
        <Btn label="メトロノーム" className="w-6 border-r border-[#55585b]">
          <Icon size={14} box={14}><path d="M5 1h3l-2 8h4V6l2 7H2z" fill="currentColor" /><path d="M8 6l4-5" stroke="currentColor" strokeWidth="1.500" /></Icon>
        </Btn>
        <Btn label="メトロノーム設定" className="flex-1"><Gear /></Btn>
      </div>
      <Dots />
      <div className={`${group} w-[89px] bg-[#191a1c] py-px pr-[3px]`}>
        <span className="w-[25px] border-r border-[#55585b]" />
        <span className="ml-auto w-1 bg-[#e01010]" />
      </div>
      <span className="-mr-1"><Dots /></span>
    </footer>
  );
}

/* ---------- file explorer ---------- */

const Folder = ({ lib = false, zip = false }: { lib?: boolean; zip?: boolean }) => (
  <Icon>
    <path d="M0 2a1 1 0 0 1 1-1h4.500L7.500 3H15a1 1 0 0 1 1 1V7H0z" fill="#e0a91f" />
    <path d="M0 5.500h6L7.500 4H15a1 1 0 0 1 1 1V13a1 1 0 0 1-1 1H1a1 1 0 0 1-1-1z" fill="#fcd462" />
    {lib && <path d="M0 14h16v1.500H0z" fill="#2a8ac0" />}
    {zip && <path d="M1 10.500h14M1 12.500h14" stroke="#8a7a4a" strokeDasharray="1 1" />}
  </Icon>
);

const Page = ({ children }: { children?: ReactNode }) => (
  <Icon>
    <path d="M2.500.5h8l3 3v12h-11z" fill="#fff" stroke="#8a8d91" />
    <path d="M10.500.5v3h3" fill="none" stroke="#8a8d91" />
    {children}
  </Icon>
);

const Screen = ({ children }: { children?: ReactNode }) => (
  <Icon>
    <path d="M0 2h16v10H0z" fill="#1b9dc4" />
    <path d="M0 12V2h16z" fill="#35c0e0" />
    <path d="M7 12h2v2h3v1H4v-1h3z" fill="#8a98a3" />
    {children}
  </Icon>
);

const icons: Record<string, ReactNode> = {
  folder: <Folder />,
  lib: <Folder lib />,
  zip: <Folder zip />,
  cloud: <Icon><path d="M4 13a4 4 0 0 1-.5-7.500A5 5 0 0 1 12.500 6 3.600 3.600 0 0 1 13 13z" fill="#1a86dc" /><path d="M3 13.200 10 9l5 3a3.500 3.500 0 0 1-2 1.200z" fill="#36b3f2" /><path d="M3.500 5.500a5 5 0 0 1 9 .5L8 8z" fill="#0a5cb0" /></Icon>,
  down: <Icon><path d="M8 1v9M4 7l4 4 4-4M2 15h12" fill="none" stroke="#1fa58a" strokeWidth="1.800" /></Icon>,
  desktop: <Icon><rect y="2" width="16" height="12" rx="1" fill="#1193c8" /><path d="M0 3a1 1 0 0 1 1-1h14L3 14H1a1 1 0 0 1-1-1z" fill="#2dc0dc" /><path d="M2 4.500h1.500M2 7h1.500M2 9.500h1.500" stroke="#fff" /></Icon>,
  doc: <Icon><rect x="2" width="12" height="16" rx="1" fill="#7e93a9" /><path d="M4.500 4H8v3H4.500zM9.500 4.500H12M9.500 6.500H12M4.500 9.500H12M4.500 12H12" fill="#fff" stroke="#fff" /></Icon>,
  pic: <Icon><rect x="1" y="1" width="14" height="14" rx="1" fill="#1376c4" /><path d="M2 14l5.500-6L14 14z" fill="#fff" /><circle cx="11.500" cy="4.500" r="1.200" fill="#fff" /></Icon>,
  video: <Icon><rect x="1" width="14" height="16" rx="1" fill="#8b48d8" /><path d="M3 2v12M13 2v12" stroke="#4b1c90" strokeWidth="1.500" strokeDasharray="2 1.500" /><path d="M6 5v6l5-3z" fill="#fff" /></Icon>,
  music: <Icon><circle cx="8" cy="8" r="8" fill="#cc6b62" /><path d="M8.500 3.500v7M8.500 4l3 1.500" stroke="#fff" strokeWidth="1.400" /><circle cx="7" cy="10.700" r="2" fill="#fff" /></Icon>,
  pc: <Screen />,
  disc: <Icon><circle cx="8" cy="8" r="7.500" fill="#c9cbcd" /><path d="M8 8 3 2.500A7.500 7.500 0 0 1 8 .5zM8 8l5 5.500a7.500 7.500 0 0 1-5 2z" fill="#ecedee" /><circle cx="8" cy="8" r="2" fill="#fff" stroke="#aaa" /></Icon>,
  file: <Page />,
  net: <Screen><circle cx="4.500" cy="4.500" r="4.500" fill="#5d9fc0" /><path d="M1 3l3-1 1 3-2 2z" fill="#cfe6ee" /></Screen>,
  panel: <Icon><rect x=".5" y="2.500" width="15" height="11" fill="#8fd3f0" stroke="#1378b0" /><circle cx="5.500" cy="8" r="2.700" fill="#1a67b2" /><path d="M5.500 8V5.300A2.700 2.700 0 0 1 8.200 8z" fill="#fff" /><path d="M10 6h4M10 8.500h4M10 11h4" stroke="#1a67b2" /></Icon>,
  bin: <Icon><path d="M2.500 2h11l-1.300 13H3.800z" fill="#e3e8ec" stroke="#a9b2ba" /><path d="M6 7l2-2 2 2M10 9l-1 2.500H7L6 9" fill="none" stroke="#1a7cc8" strokeWidth="1.500" /></Icon>,
  sc: <Icon><path d="M8 0l7 3v9l-7 4-7-4V3z" fill="#1ea4e8" /><path d="M8 6l7-3v9l-7 4z" fill="#1456c8" /><path d="M8 0l7 3-7 3-7-3z" fill="#6fe0d0" /><path d="M6 6l5-1v6l-3 1z" fill="#b8e86a" /></Icon>,
  png: <Page><rect x="4.500" y="5" width="6.500" height="6" fill="#1a74c4" /><path d="M5 10l5-4" stroke="#9ad0f5" /></Page>,
  cake: <Icon><path d="M1 3.500h6M9 1.500h6M1 8h6M9 8h6M0 12.500h7M9 12.500h6" stroke="#f0935a" strokeWidth="1.700" /></Icon>,
  mid: <Page><path d="M3 5h5M3 8h5M3 11h4" stroke="#3a4a5a" strokeWidth="1.300" /><path d="M10.500 4v7l1.500-4" stroke="#1a8ec8" strokeWidth="1.500" fill="none" /><circle cx="9" cy="11" r="2" fill="#1a8ec8" /></Page>,
  aud: <Icon><ellipse cx="8" cy="10.500" rx="5" ry="3.500" fill="#f5a020" /><path d="M4 10.500h8" stroke="#e03010" strokeWidth="2" /><path d="M2 9a6 7.500 0 0 1 12 0" fill="none" stroke="#2420c0" strokeWidth="2" /><rect y="8" width="4" height="6" rx="1.500" fill="#2420c0" /><rect x="12" y="8" width="4" height="6" rx="1.500" fill="#2420c0" /></Icon>,
  txt: <Page><path d="M4.500 4h5M4.500 6h7M4.500 8h7M4.500 10h7M4.500 12h7" stroke="#8a8d91" /></Page>,
  wav: <Page><circle cx="8" cy="9" r="3.500" fill="#35303c" /><path d="M4.500 9A3.500 3.500 0 0 1 8 5.500" fill="none" stroke="#c05a3a" /><path d="M7 7.200v3.600L10 9z" fill="#fff" /></Page>,
  mp3: <Page><path d="M8.500 4v7M8.500 4l2.500 3" stroke="#1a8ec8" strokeWidth="1.500" fill="none" /><circle cx="7" cy="11" r="2" fill="#1a8ec8" /></Page>,
  msi: <Icon><path d="M0 1h16v11H0z" fill="#1b9dc4" /><path d="M16 1v11H6z" fill="#16779c" /><circle cx="5" cy="11" r="4.500" fill="#d6dde2" /><circle cx="5" cy="11" r="1.300" fill="#6d8fa5" /></Icon>,
};

const places: [string, string, boolean][] = [
  ["cloud", "OneDrive - Personal", true],
  ["down", "Downloads", true],
  ["desktop", "デスクトップ", true],
  ["doc", "ドキュメント", true],
  ["pic", "ピクチャ", true],
  ["video", "ビデオ", true],
  ["music", "ミュージック", true],
  ["folder", "Kano Yukinori", true],
  ["pc", "PC", true],
  ["lib", "ライブラリ", true],
  ["disc", "BD-RE ドライブ (D:) MrPC22", true],
  ["file", "Launchkey Mini (F:)", true],
  ["net", "ネットワーク", true],
  ["panel", "コントロール パネル", true],
  ["bin", "ごみ箱", false],
  ["folder", "Audio", true],
  ["folder", "Auto Saves", false],
  ["folder", "chatgpt-site", false],
  ["folder", "cubase", true],
  ["folder", "Export", false],
  ["folder", "Gemini", false],
  ["folder", "Images", false],
  ["folder", "jijii", true],
  ["folder", "malib", true],
  ["folder", "maniuta", true],
  ["folder", "midi_Telepathy", true],
  ["folder", "Mixdown", false],
];

const files: string[][] = [
  ["folder", "Track Pictures", "2025/08/11 14:39", "ファイル フォル"],
  ["今月に入って (先週は含めず)"],
  ["sc", "sc.exe", "2025/08/09 21:58", "アプリケーション"],
  ["png", "Gxu-dmiaoAAt9G0.png", "2025/08/08 0:36", "PNG ファイル"],
  ["cake", "Cakewalk_Product_Center_Setup_1.0.0.09...", "2025/08/08 0:07", "アプリケーション"],
  ["mid", "きゅうり_メロディー.mid", "2025/08/07 23:59", "MIDI シーケンス"],
  ["zip", "きゅうり_調声用データ.zip", "2025/08/07 23:41", "圧縮 (zip 形式)"],
  ["aud", "audacity-win-3.7.5-64bit.exe", "2025/08/07 21:28", "アプリケーション"],
  ["png", "quote_1402975776369938532.png", "2025/08/07 20:25", "PNG ファイル"],
  ["txt", "redio.txt", "2025/08/05 15:32", "テキスト ドキュメント"],
  ["png", "quote_1401521298202562620.png", "2025/08/03 20:05", "PNG ファイル"],
  ["png", "xyu_mi.png", "2025/08/03 18:01", "PNG ファイル"],
  ["mid", "めろさいしゅう.mid", "2025/08/02 17:49", "MIDI シーケンス"],
  ["mid", "Surge XT 01.mid", "2025/08/02 15:50", "MIDI シーケンス"],
  ["wav", "ウェブマニア鼻歌2.wav", "2025/08/01 22:28", "WAV ファイル"],
  ["wav", "限界音量マニボエ.wav", "2025/08/01 21:43", "WAV ファイル"],
  ["wav", "250801_213525.mp4", "2025/08/01 21:36", "MP4 ファイル"],
  ["mid", "ためしにmidi.mid", "2025/08/01 20:10", "MIDI シーケンス"],
  ["mid", "HALion Sonic 01.mid", "2025/08/01 1:45", "MIDI シーケンス"],
  ["wav", "死にたい feat ウェブマニア.wav", "2025/08/01 1:04", "WAV ファイル"],
  ["folder", "Cakewalk", "2025/08/08 0:08", "ファイル フォル"],
  ["先月"],
  ["zip", "43901_win.zip", "2025/07/25 12:45", "圧縮 (zip 形式)"],
  ["mp3", "ああああ.mp3", "2025/07/23 22:19", "MP3 形式サウンド"],
  ["png", "quote_1397535907741044859.png", "2025/07/23 20:11", "PNG ファイル"],
  ["wav", "でけでけ.wav", "2025/07/23 4:35", "WAV ファイル"],
  ["wav", "でけでけめろ.wav", "2025/07/23 4:34", "WAV ファイル"],
  ["msi", "node-v22.17.1-x64.msi", "2025/07/22 23:57", "Windows イン"],
  ["wav", "骨粗鬆症患者処方書、骨粗鬆症初期処方...", "2025/07/21 21:14", "WAV ファイル"],
];

function FileRow({ file: [icon, name, date, kind] }: { file: string[] }) {
  const selected = name.startsWith("死にたい");
  const tone = selected
    ? "border-y-black bg-[#cce8ff]"
    : name === "redio.txt"
      ? "border-y-transparent bg-[#e5f2fb]"
      : "border-y-transparent";
  const cell = `flex h-6 items-center border-y ${tone}`;
  return (
    <tr className="h-7 text-[11px]">
      <td className="pl-[15px]">
        <div className={`${cell} gap-1 border-l pl-[3px] ${selected ? "border-l-black" : "border-l-transparent"}`}>
          {icons[icon]}
          <span className="truncate">{name}</span>
        </div>
      </td>
      <td><div className={`${cell} pl-[7px] ${selected ? "text-[#3c4650]" : "text-[#767676]"}`}>{date}</div></td>
      <td><div className={`${cell} overflow-hidden pl-[7px] ${selected ? "text-[#3c4650]" : "text-[#767676]"}`}>{kind}</div></td>
    </tr>
  );
}

function StatusBar({ count, picked }: { count: string; picked: string }) {
  return (
    <div className="flex h-6 items-center pr-[7px] pl-3.5 text-xs text-[#3d546c]">
      <span className="w-[88px]">{count}</span>
      <span>{picked}</span>
      <Btn label="詳細表示" className="ml-auto h-[23px] w-[22px] border border-[#0f74a8] bg-[#e3f2fb] text-[#2a4a60]">
        <Icon size={14} box={14}><path d="M1 3.500h12M1 6.500h12M1 9.500h12M1 12.500h12" stroke="currentColor" /></Icon>
      </Btn>
      <Btn label="大アイコン表示" className="ml-1 w-[15px] text-[#333]">
        <Icon size={13} box={13}><path d="M1.500.5h10v8h-10zM.5 11.500h12" fill="none" stroke="currentColor" /></Icon>
      </Btn>
    </div>
  );
}

function BackWindow() {
  return (
    <div className="absolute top-[36px] left-[253px] flex h-[1006px] w-[710px] flex-col overflow-hidden rounded-lg bg-[#dcdcdc]">
      <div className="h-[39px] border-b border-[#c4c4c4] bg-[#cfcfcf]" />
      <div className="h-[49px] border-b border-[#b8b8b8] bg-[#d8d8d8]" />
      <div className="h-[47px] border-b border-[#b8b8b8]" />
      <div className="mt-auto bg-[#d4d4d4]"><StatusBar count="6 個の項目" picked="1 個の項目を選択  93.6 KB" /></div>
    </div>
  );
}

function Explorer() {
  return (
    <div className="absolute top-[27px] left-[265px] flex h-[1006px] w-[710px] flex-col overflow-hidden rounded-lg bg-white text-xs text-[#1b1b1b] shadow-[0_4px_20px_rgba(0,0,0,0.5)]">
      <div className="flex h-[39px] items-start bg-[#c8dfea]">
        <div className="mt-2 ml-2 flex h-[31px] w-[240px] items-center rounded-t-lg bg-[#eff4fa] px-[9px]">
          <Folder />
          <span className="ml-2.5 font-medium">Downloads</span>
          <Btn label="タブを閉じる" className="ml-auto p-1"><X size={14} strokeWidth={1.500} /></Btn>
        </div>
        <Btn label="新しいタブ" className="mt-2 h-[31px] w-11"><Plus size={15} strokeWidth={1.300} /></Btn>
        <div className="ml-auto flex h-7">
          <Btn label="最小化" className="w-[46px]"><Minus size={14} strokeWidth={1.800} /></Btn>
          <Btn label="最大化" className="w-[46px]"><Square size={13} strokeWidth={2.200} /></Btn>
          <Btn label="閉じる" className="w-[46px]"><X size={16} strokeWidth={1.600} /></Btn>
        </div>
      </div>
      <div className="flex h-[49px] items-center border-b border-[#b5ced9] bg-[#eff4fa] pr-3 pl-[3px] text-[13px]">
        <Btn label="戻る" className="w-12 text-[#9b9fa3]"><ArrowLeft size={17} strokeWidth={1.300} /></Btn>
        <Btn label="進む" className="w-12 text-[#9b9fa3]"><ArrowRight size={17} strokeWidth={1.300} /></Btn>
        <Btn label="上へ" className="w-12"><ArrowUp size={17} strokeWidth={1.300} /></Btn>
        <Btn label="更新" className="w-12"><RotateCw size={15} strokeWidth={1.400} /></Btn>
        <div className="ml-1.5 flex h-8 flex-1 items-center rounded-[4px] bg-[#fafcfe] pl-[13px]">
          <Monitor size={17} strokeWidth={1.500} />
          <ChevronRight size={14} strokeWidth={1.600} className="ml-3.5" />
          <Ellipsis size={14} className="ml-4" />
          <a href="#malib" className="ml-4">malib</a>
          <ChevronRight size={14} strokeWidth={1.600} className="mx-3.5" />
          <a href="#downloads">Downloads</a>
          <ChevronRight size={14} strokeWidth={1.600} className="ml-3.5" />
        </div>
        <label className="ml-2 flex h-8 w-[135px] items-center rounded-[4px] bg-[#fafcfe] pr-3 pl-3.5">
          <input type="text" aria-label="Downloadsの検索" placeholder="Downloadsの検索" className="w-[77px] bg-transparent outline-none placeholder:text-[#686c70]" />
          <Search size={13} strokeWidth={1.600} className="ml-auto shrink-0" />
        </label>
      </div>
      <div className="flex h-[47px] items-center border-b border-[#c3d0d8] pl-[17px] text-[#333]">
        <button className="flex w-[102px] items-center">
          <Icon size={18}><circle cx="8" cy="8" r="6.700" fill="none" stroke="#4a4a4a" /><path d="M8 5v6M5 8h6" stroke="#1478b8" /></Icon>
          <span className="mx-[7px]">新規作成</span>
          <ChevronDown size={9} strokeWidth={1.500} />
        </button>
        <span className="mr-0.5 h-8 border-l border-[#e8e8e8]" />
        <Btn label="切り取り" className="w-12 text-[#3a6f94]"><Scissors size={17} strokeWidth={1.300} className="-rotate-90" /></Btn>
        <Btn label="コピー" className="w-12 text-[#1478b8]">
          <Icon size={16}>
            <rect x="6.500" y="1" width="8" height="11" rx="2" fill="none" stroke="currentColor" strokeWidth="1.300" />
            <path d="M4 4.500H3.500a2 2 0 0 0-2 2V13a2 2 0 0 0 2 2h5a2 2 0 0 0 1.700-1" fill="none" stroke="#555" />
          </Icon>
        </Btn>
        <Btn label="貼り付け" className="w-12 text-[#b5c2c2]"><Clipboard size={17} strokeWidth={1.300} /></Btn>
        <Btn label="名前の変更" className="w-12">
          <Icon size={17}><path d="M9.500 2.500H3a2 2 0 0 0-2 2v7a2 2 0 0 0 2 2h6.500M12.500 2.500h.5a2 2 0 0 1 2 2v7a2 2 0 0 1-2 2h-.5" fill="none" stroke="#555" /><path d="M9.500.5h3.500M9.500 15.500h3.500M11.200.5v15M3.500 11 6 5l2.500 6M4.500 9h3" fill="none" stroke="#1478b8" /></Icon>
        </Btn>
        <Btn label="共有" className="w-12">
          <Icon size={17}><path d="M6 2.500H3.500a2 2 0 0 0-2 2v8a2 2 0 0 0 2 2h8a2 2 0 0 0 2-2V11" fill="none" stroke="#555" /><path d="M10 1.500 15 6l-5 4.500V8Q6.500 8 4.500 11 4.800 4.500 10 4z" fill="none" stroke="#1478b8" /></Icon>
        </Btn>
        <Btn label="削除" className="w-12"><Trash2 size={17} strokeWidth={1.300} /></Btn>
        <span className="ml-0.5 h-8 border-l border-[#e8e8e8]" />
        <button className="ml-4 flex items-center">
          <Icon size={17}><path d="M4.500 14V2M1 5.500 4.500 2 8 5.500" fill="none" stroke="#555" /><path d="M11.500 2v12M8 10.500l3.500 3.500 3.500-3.500" fill="none" stroke="#1478b8" /></Icon>
          <span className="mx-[7px] text-[11px]">並べ替え</span>
          <ChevronDown size={9} strokeWidth={1.500} />
        </button>
        <Btn label="その他" className="ml-[18px] w-8"><Ellipsis size={19} strokeWidth={2.500} /></Btn>
        <button className="mr-[22px] ml-auto flex items-center gap-[7px]">
          <Icon size={17}><path d="M10 2.500H2.500a2 2 0 0 0-2 2v7a2 2 0 0 0 2 2H10" fill="none" stroke="#555" /><path d="M9.500 2.500h4a2 2 0 0 1 2 2v7a2 2 0 0 1-2 2h-4zM11 5.500h2.500M11 8h2.500M11 10.500h2.500" fill="none" stroke="#1478b8" /></Icon>
          詳細
        </button>
      </div>

      <div className="flex min-h-0 flex-1">
        <ul className="w-[196px] shrink-0 overflow-hidden text-[11px] whitespace-nowrap">
          {places.map(([icon, name, open]) => (
            <li key={name} className="flex h-8 items-center pl-[18px]">
              <span className="w-6 shrink-0 text-[#777]">{open && <ChevronRight size={14} strokeWidth={2} />}</span>
              {icons[icon]}
              <span className="ml-[5px]">{name}</span>
            </li>
          ))}
        </ul>
        <div className="w-4 shrink-0 bg-[#f0f0f0] pt-[49px] pl-[7px]">
          <div className="h-[264px] w-0.5 bg-[#868686]" />
        </div>
        <div className="ml-0.5 flex w-[480px] shrink-0 flex-col border-l border-[#e8e8e8]">
          <div className="min-h-0 flex-1 overflow-hidden">
            <table className="w-full table-fixed border-separate border-spacing-0 text-left whitespace-nowrap">
              <colgroup>
                <col className="w-[272px]" />
                <col className="w-36" />
                <col />
              </colgroup>
              <thead>
                <tr className="h-[26px] text-[#4c607a]">
                  <th className="border-r border-[#e2e2e2] pl-[31px] font-normal">名前</th>
                  <th className="relative border-r border-[#e2e2e2] pl-[7px] font-normal">
                    更新日時
                    <ChevronDown size={10} strokeWidth={1.300} className="absolute inset-x-0 top-0 mx-auto" />
                  </th>
                  <th className="pl-[7px] font-normal">種類</th>
                </tr>
              </thead>
              <tbody>
                {files.map((f) =>
                  f.length === 1 ? (
                    <tr key={f[0]} className="h-[27px] text-[#1e3287]">
                      <th colSpan={3} className="pb-0.5 pl-1 text-sm leading-5 font-normal">
                        <span className="flex items-center gap-[3px]">
                          <ChevronDown size={16} strokeWidth={1.500} color="#777" />
                          {f[0]}
                        </span>
                      </th>
                    </tr>
                  ) : (
                    <FileRow key={f[1]} file={f} />
                  ),
                )}
              </tbody>
            </table>
          </div>
          <div className="h-[15px] bg-[#f0f0f0] pt-[7px] pl-[17px]"><div className="h-0.5 w-[338px] bg-[#868686]" /></div>
        </div>
        <div className="mb-[15px] flex-1 bg-[#f0f0f0] pt-[100px] pl-[7px]">
          <div className="h-[149px] w-0.5 bg-[#868686]" />
        </div>
      </div>
      <StatusBar count="147 個の項目" picked="1 個の項目を選択  4.75 MB" />
    </div>
  );
}

export default function App() {
  return (
    <div className="relative flex min-h-screen flex-col overflow-hidden bg-[#24282b] font-['Noto_Sans','Noto_Sans_CJK_JP',sans-serif] [font-feature-settings:'palt']">
      <TopBars />
      <main className="flex flex-1 gap-1 bg-[#08090a] px-1 pt-[5px]">
        <div className="flex min-w-0 flex-1 flex-col">
          <ProjectZone />
          <div className="h-1" />
          <EditorZone />
          <div className="flex h-6 items-start text-xs font-bold text-[#d2d3d4]">
            <Btn label="下ゾーンを閉じる" className="h-5 w-5"><X size={13} strokeWidth={3.500} /></Btn>
            <button className="h-[22px] w-[106px] pl-1">MixConsole</button>
            <div className="-mt-0.5 flex h-[22px] w-[106px] items-center rounded-b-[3px] border-2 border-t-0 border-[#5d6062] bg-[#24282b] pt-1 text-[11px]">
              <button className="flex-1">エディター</button>
              <Btn label="エディターの選択" className="pr-1"><Caret /></Btn>
            </div>
          </div>
        </div>
        <RightZone />
      </main>
      <Transport />
      <BackWindow />
      <Explorer />
    </div>
  );
}
